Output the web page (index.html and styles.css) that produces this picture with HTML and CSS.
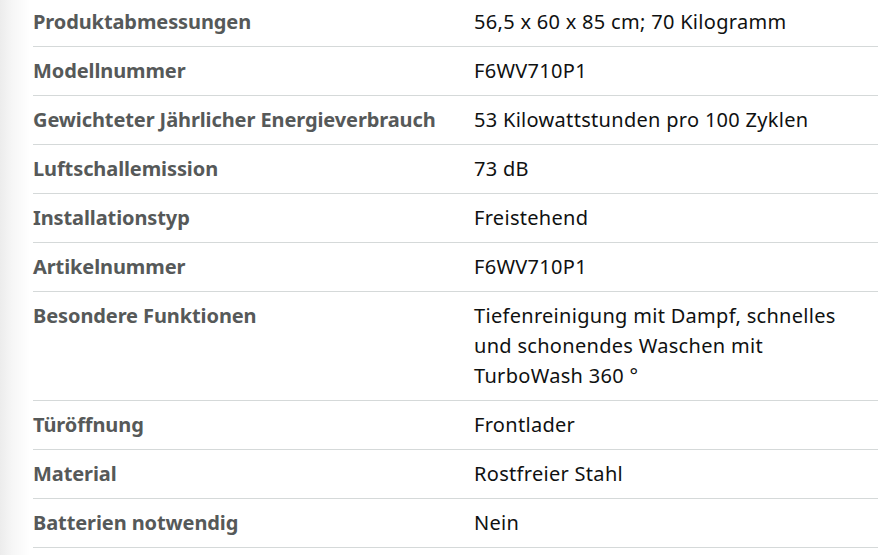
FILE: index.html
```
<!DOCTYPE html>
<html lang="de">
<head>
<meta charset="utf-8">
<link rel="stylesheet" href="styles.css">
</head>
<body>
<div class="page">
  <div class="shade"></div>
  <table class="specs">
    <tr><th>Produktabmessungen</th><td>56,5 x 60 x 85 cm; 70 Kilogramm</td></tr>
    <tr><th>Modellnummer</th><td>F6WV710P1</td></tr>
    <tr><th>Gewichteter Jährlicher Energieverbrauch</th><td>53 Kilowattstunden pro 100 Zyklen</td></tr>
    <tr><th>Luftschallemission</th><td>73 dB</td></tr>
    <tr><th>Installationstyp</th><td>Freistehend</td></tr>
    <tr><th>Artikelnummer</th><td>F6WV710P1</td></tr>
    <tr><th>Besondere Funktionen</th><td>Tiefenreinigung mit Dampf, schnelles und schonendes Waschen mit TurboWash 360 °</td></tr>
    <tr><th>Türöffnung</th><td>Frontlader</td></tr>
    <tr><th>Material</th><td>Rostfreier Stahl</td></tr>
    <tr><th>Batterien notwendig</th><td>Nein</td></tr>
  </table>
</div>
</body>
</html>
```
FILE: styles.css
```
html, body {
  margin: 0;
  padding: 0;
  background: #ffffff;
}
.page {
  display: flex;
  width: 889px;
  height: 555px;
  overflow: hidden;
  background: linear-gradient(to right, #ececec 0px, #f6f6f6 12px, #ffffff 30px);
}
.shade {
  width: 33px;
  flex: none;
}
.specs {
  border-collapse: collapse;
  table-layout: fixed;
  width: 845px;
  margin-top: -3px;
  align-self: flex-start;
  font-family: "Noto Sans", "Open Sans", sans-serif;
  font-size: 20px;
  line-height: 30px;
}
.specs tr {
  border-top: 1px solid #d5d9d9;
  border-bottom: 1px solid #d5d9d9;
}
.specs th {
  width: 441px;
  padding: 9px 0;
  text-align: left;
  vertical-align: top;
  font-weight: 700;
  color: #565959;
  letter-spacing: -0.1px;
}
.specs td {
  padding: 9px 34px 9px 0;
  vertical-align: top;
  color: #0f1111;
  letter-spacing: 0.3px;
}
```
